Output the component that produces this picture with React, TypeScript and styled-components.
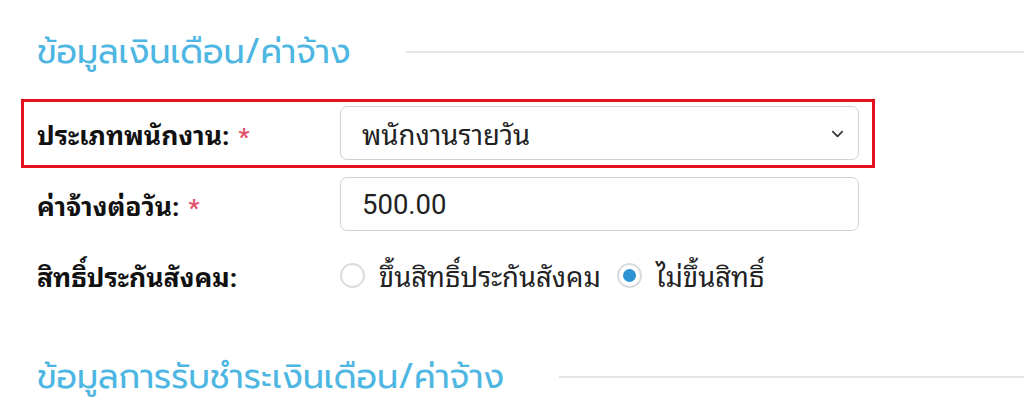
import React from "react";
import styled, { createGlobalStyle } from "styled-components";

const Global = createGlobalStyle`
  html, body { margin: 0; padding: 0; background: #fff; }
  body { width: 1024px; height: 405px; overflow: hidden; font-family: Roboto, "Noto Sans Thai Looped", sans-serif; }
`;

const Page = styled.div`
  display: flex;
  flex-direction: column;
  padding-top: 28px;
`;

const SectionHead = styled.div<{ $lineGap: number }>`
  display: flex;
  align-items: center;
  padding-left: 37px;
  height: 48px;
  h2 {
    margin: 0;
    font-family: Prompt, "Noto Sans Thai", sans-serif;
    font-weight: 400;
    font-size: 33.6px;
    line-height: 48px;
    color: #4db6e2;
    white-space: nowrap;
  }
  &::after {
    content: "";
    flex: 1;
    height: 2px;
    background: #e6e6e6;
    margin-left: ${(p) => p.$lineGap}px;
  }
`;

const Form = styled.div`
  display: flex;
  flex-direction: column;
  gap: 2px;
  margin-top: 23px;
  padding-left: 21px;
  width: 854px;
`;

const Row = styled.div<{ $highlight?: boolean }>`
  display: grid;
  grid-template-columns: 303px 519px;
  align-items: center;
  border: 3px solid ${(p) => (p.$highlight ? "#e3121b" : "transparent")};
  padding: 4px 13px 5px 13px;
`;

const Label = styled.label`
  display: flex;
  align-items: center;
  font-family: Roboto, "Noto Sans Thai Looped", sans-serif;
  font-weight: 700;
  font-size: 26.5px;
  color: #111;
  white-space: nowrap;
`;

const Req = styled.span`
  color: #e2506a;
  margin-left: 9px;
  padding-top: 7px;
  font-size: 24px;
  font-weight: 700;
`;

const Control = styled.div`
  box-sizing: border-box;
  height: 54px;
  border: 1px solid #cfd3d8;
  border-radius: 7px;
  display: flex;
  align-items: center;
  padding: 0 13px 0 21px;
  font-family: Roboto, "Noto Sans Thai Looped", sans-serif;
  font-size: 27.5px;
  color: #222;
  background: #fff;
  span { flex: 1; }
`;

const Radios = styled.div`
  display: flex;
  align-items: center;
  height: 54px;
  gap: 16px;
`;

const RadioItem = styled.label`
  display: flex;
  align-items: center;
  gap: 14px;
  font-family: Roboto, "Noto Sans Thai Looped", sans-serif;
  font-size: 27.4px;
  color: #222;
  white-space: nowrap;
`;

const Dot = styled.span<{ $on?: boolean }>`
  box-sizing: border-box;
  width: 25px;
  height: 25px;
  border-radius: 50%;
  border: 2px solid #d9dcdf;
  display: flex;
  align-items: center;
  justify-content: center;
  &::after {
    content: "";
    width: 13px;
    height: 13px;
    border-radius: 50%;
    background: ${(p) => (p.$on ? "#2b92d3" : "transparent")};
  }
`;

const Spacer = styled.div`
  height: 43px;
`;

export default function App() {
  return (
    <>
      <Global />
      <Page>
        <SectionHead $lineGap={55}>
          <h2>ข้อมูลเงินเดือน/ค่าจ้าง</h2>
        </SectionHead>
        <Form>
          <Row $highlight>
            <Label>
              ประเภทพนักงาน:<Req>*</Req>
            </Label>
            <Control>
              <span>พนักงานรายวัน</span>
              <svg width="15" height="15" viewBox="0 0 16 16" fill="none">
                <path d="M3 6l5 5 5-5" stroke="#333" strokeWidth="1.8" strokeLinecap="round" strokeLinejoin="round" />
              </svg>
            </Control>
          </Row>
          <Row>
            <Label>
              ค่าจ้างต่อวัน:<Req>*</Req>
            </Label>
            <Control>
              <span>500.00</span>
            </Control>
          </Row>
          <Row>
            <Label>สิทธิ์ประกันสังคม:</Label>
            <Radios>
              <RadioItem>
                <Dot />
                ขึ้นสิทธิ์ประกันสังคม
              </RadioItem>
              <RadioItem>
                <Dot $on />
                ไม่ขึ้นสิทธิ์
              </RadioItem>
            </Radios>
          </Row>
        </Form>
        <Spacer />
        <SectionHead $lineGap={55}>
          <h2>ข้อมูลการรับชำระเงินเดือน/ค่าจ้าง</h2>
        </SectionHead>
      </Page>
    </>
  );
}
